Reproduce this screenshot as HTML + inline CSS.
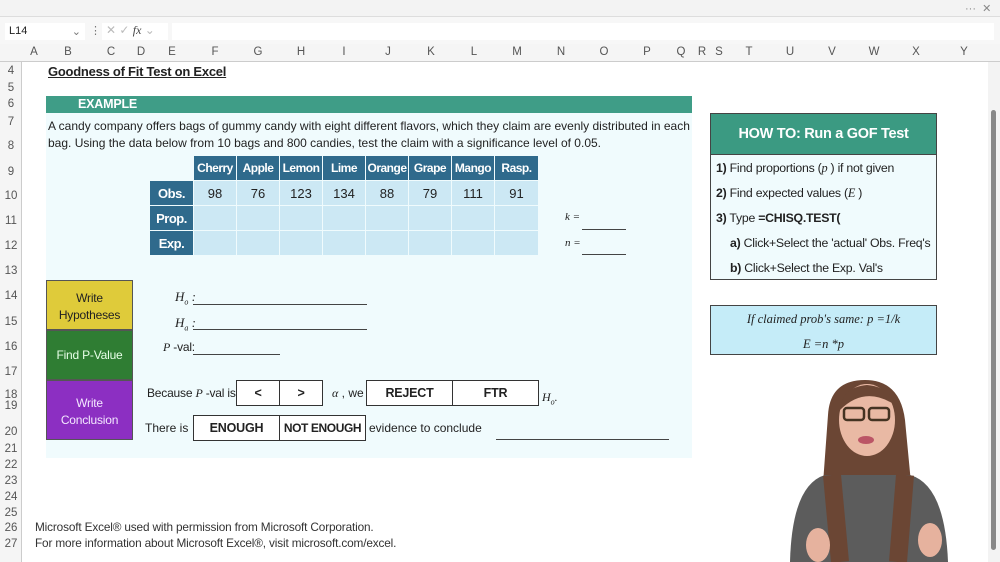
<!DOCTYPE html>
<html><head><style>
*{margin:0;padding:0;box-sizing:border-box}
body{width:1000px;height:562px;overflow:hidden;background:#fff;font-family:"Liberation Sans",Arial,sans-serif;position:relative;color:#222}
.a{position:absolute}
.rn{position:absolute;left:0;width:22px;text-align:center;font-size:11.5px;color:#555}
.ch{position:absolute;top:46px;font-size:11.5px;color:#555;transform:translateX(-50%)}
.cell{position:absolute;height:24px;display:flex;align-items:center;justify-content:center;font-size:13px}
.hd{background:#2f6a8c;color:#fff;font-weight:bold;font-size:12px;letter-spacing:-0.5px;white-space:nowrap}
.dt{background:#cce8f4}
.btn{position:absolute;border:1.5px solid #333;background:#fff;display:flex;align-items:center;justify-content:center;font-weight:bold;font-size:12.5px;height:26px;letter-spacing:-0.2px}
.it{font-family:"Liberation Serif",serif;font-style:italic}
.ln{position:absolute;border-bottom:1px solid #444;height:1px}
</style></head><body>
<div class="a" style="left:0;top:0;width:1000px;height:17px;background:#f3f3f3;border-bottom:1px solid #ddd"></div>
<div class="a" style="left:965px;top:2px;font-size:11px;color:#888">··· &nbsp;✕</div>
<div class="a" style="left:0;top:17px;width:1000px;height:27px;background:#f7f7f7"></div>
<div class="a" style="left:5px;top:23px;width:80px;height:17px;background:#fff;font-size:11px;padding:2px 4px">L14<span style="float:right;color:#777">⌄</span></div>
<div class="a" style="left:90px;top:24px;font-size:11px;color:#777">⋮</div>
<div class="a" style="left:102px;top:23px;width:66px;height:17px;background:#fff;font-size:12px;color:#bbb;padding-left:4px">✕ ✓ <span style="color:#444;font-family:'Liberation Serif';font-style:italic">fx</span> ⌄</div>
<div class="a" style="left:172px;top:23px;width:822px;height:17px;background:#fff"></div>
<div class="a" style="left:0;top:44px;width:1000px;height:18px;background:#f5f5f5;border-bottom:1px solid #ccc"></div>
<div class="a" style="left:0;top:62px;width:22px;height:500px;background:#f5f5f5;border-right:1px solid #ccc"></div>
<div class="ch" style="left:34px">A</div><div class="ch" style="left:68px">B</div><div class="ch" style="left:111px">C</div><div class="ch" style="left:141px">D</div><div class="ch" style="left:172px">E</div><div class="ch" style="left:215px">F</div><div class="ch" style="left:258px">G</div><div class="ch" style="left:301px">H</div><div class="ch" style="left:344px">I</div><div class="ch" style="left:388px">J</div><div class="ch" style="left:431px">K</div><div class="ch" style="left:474px">L</div><div class="ch" style="left:517px">M</div><div class="ch" style="left:561px">N</div><div class="ch" style="left:604px">O</div><div class="ch" style="left:647px">P</div><div class="ch" style="left:681px">Q</div><div class="ch" style="left:702px">R</div><div class="ch" style="left:719px">S</div><div class="ch" style="left:749px">T</div><div class="ch" style="left:790px">U</div><div class="ch" style="left:832px">V</div><div class="ch" style="left:874px">W</div><div class="ch" style="left:916px">X</div><div class="ch" style="left:964px">Y</div>
<div class="rn" style="top:65px">4</div><div class="rn" style="top:82px">5</div><div class="rn" style="top:98px">6</div><div class="rn" style="top:116px">7</div><div class="rn" style="top:140px">8</div><div class="rn" style="top:166px">9</div><div class="rn" style="top:190px">10</div><div class="rn" style="top:215px">11</div><div class="rn" style="top:240px">12</div><div class="rn" style="top:265px">13</div><div class="rn" style="top:290px">14</div><div class="rn" style="top:316px">15</div><div class="rn" style="top:341px">16</div><div class="rn" style="top:366px">17</div><div class="rn" style="top:389px">18</div><div class="rn" style="top:400px">19</div><div class="rn" style="top:426px">20</div><div class="rn" style="top:443px">21</div><div class="rn" style="top:459px">22</div><div class="rn" style="top:475px">23</div><div class="rn" style="top:491px">24</div><div class="rn" style="top:507px">25</div><div class="rn" style="top:522px">26</div><div class="rn" style="top:538px">27</div>
<div class="a" style="left:988px;top:62px;width:12px;height:500px;background:#f3f3f3"></div>
<div class="a" style="left:991px;top:110px;width:5px;height:440px;background:#888;border-radius:3px"></div>

<div class="a" style="left:48px;top:64px;font-weight:bold;font-size:13px;text-decoration:underline;letter-spacing:-0.25px">Goodness of Fit Test on Excel</div>
<div class="a" style="left:46px;top:112px;width:646px;height:346px;background:#f0fbfd"></div>
<div class="a" style="left:46px;top:96px;width:646px;height:17px;background:#3f9d87;color:#fff;font-weight:bold;font-size:12.5px;padding:1px 0 0 32px;letter-spacing:-0.2px">EXAMPLE</div>
<div class="a" style="left:48px;top:118px;width:648px;font-size:12px;line-height:17px">A candy company offers bags of gummy candy with eight different flavors, which they claim are evenly distributed in each bag. Using the data below from 10 bags and 800 candies, test the claim with a significance level of 0.05.</div>

<div class="cell hd" style="left:194px;top:156px;width:42px">Cherry</div><div class="cell hd" style="left:237px;top:156px;width:42px">Apple</div><div class="cell hd" style="left:280px;top:156px;width:42px">Lemon</div><div class="cell hd" style="left:323px;top:156px;width:42px">Lime</div><div class="cell hd" style="left:366px;top:156px;width:42px">Orange</div><div class="cell hd" style="left:409px;top:156px;width:42px">Grape</div><div class="cell hd" style="left:452px;top:156px;width:42px">Mango</div><div class="cell hd" style="left:495px;top:156px;width:43px">Rasp.</div>
<div class="cell hd" style="left:150px;top:181px;width:43px;font-size:13px">Obs.</div><div class="cell hd" style="left:150px;top:206px;width:43px;font-size:13px">Prop.</div><div class="cell hd" style="left:150px;top:231px;width:43px;font-size:13px">Exp.</div>
<div class="cell dt" style="left:194px;top:181px;width:42px">98</div><div class="cell dt" style="left:237px;top:181px;width:42px">76</div><div class="cell dt" style="left:280px;top:181px;width:42px">123</div><div class="cell dt" style="left:323px;top:181px;width:42px">134</div><div class="cell dt" style="left:366px;top:181px;width:42px">88</div><div class="cell dt" style="left:409px;top:181px;width:42px">79</div><div class="cell dt" style="left:452px;top:181px;width:42px">111</div><div class="cell dt" style="left:495px;top:181px;width:43px">91</div>
<div class="cell dt" style="left:194px;top:206px;width:42px"></div><div class="cell dt" style="left:237px;top:206px;width:42px"></div><div class="cell dt" style="left:280px;top:206px;width:42px"></div><div class="cell dt" style="left:323px;top:206px;width:42px"></div><div class="cell dt" style="left:366px;top:206px;width:42px"></div><div class="cell dt" style="left:409px;top:206px;width:42px"></div><div class="cell dt" style="left:452px;top:206px;width:42px"></div><div class="cell dt" style="left:495px;top:206px;width:43px"></div>
<div class="cell dt" style="left:194px;top:231px;width:42px"></div><div class="cell dt" style="left:237px;top:231px;width:42px"></div><div class="cell dt" style="left:280px;top:231px;width:42px"></div><div class="cell dt" style="left:323px;top:231px;width:42px"></div><div class="cell dt" style="left:366px;top:231px;width:42px"></div><div class="cell dt" style="left:409px;top:231px;width:42px"></div><div class="cell dt" style="left:452px;top:231px;width:42px"></div><div class="cell dt" style="left:495px;top:231px;width:43px"></div>
<div class="a it" style="left:565px;top:211px;font-size:11px">k =</div><div class="ln" style="left:582px;top:229px;width:44px"></div>
<div class="a it" style="left:565px;top:237px;font-size:11px">n =</div><div class="ln" style="left:582px;top:254px;width:44px"></div>

<div class="a" style="left:46px;top:280px;width:87px;height:50px;background:#dfcb3a;border:1px solid #555;font-size:12px;text-align:center;padding-top:9px;line-height:17px;letter-spacing:-0.2px">Write<br>Hypotheses</div>
<div class="a" style="left:46px;top:330px;width:87px;height:50px;background:#2f7d33;border:1px solid #555;color:#e8ffe8;font-size:12px;text-align:center;padding-top:17px;letter-spacing:-0.2px">Find P-Value</div>
<div class="a" style="left:46px;top:380px;width:87px;height:60px;background:#8c2fc2;border:1px solid #555;color:#f4e8ff;font-size:12px;text-align:center;padding-top:14px;line-height:17px;letter-spacing:-0.2px">Write<br>Conclusion</div>

<div class="a it" style="left:175px;top:289px;font-size:13px">H<sub style="font-size:8px">o</sub> :</div><div class="ln" style="left:193px;top:304px;width:174px"></div>
<div class="a it" style="left:175px;top:315px;font-size:13px">H<sub style="font-size:8px">a</sub> :</div><div class="ln" style="left:193px;top:329px;width:174px"></div>
<div class="a" style="left:163px;top:340px;font-size:12px;letter-spacing:-0.2px"><span class="it">P</span> -val:</div><div class="ln" style="left:193px;top:354px;width:87px"></div>

<div class="a" style="left:147px;top:386px;font-size:12px;letter-spacing:-0.2px">Because <span class="it">P</span> -val is</div>
<div class="btn" style="left:236px;top:380px;width:44px">&lt;</div><div class="btn" style="left:279px;top:380px;width:44px">&gt;</div>
<div class="a" style="left:332px;top:386px;font-size:12px"><span class="it">α</span> , we</div>
<div class="btn" style="left:366px;top:380px;width:87px">REJECT</div><div class="btn" style="left:452px;top:380px;width:87px">FTR</div>
<div class="a it" style="left:542px;top:390px;font-size:12px">H<sub style="font-size:8px">o</sub>.</div>
<div class="a" style="left:145px;top:421px;font-size:12px">There is</div>
<div class="btn" style="left:193px;top:415px;width:87px">ENOUGH</div><div class="btn" style="left:279px;top:415px;width:87px;font-size:12px;letter-spacing:-0.4px">NOT ENOUGH</div>
<div class="a" style="left:369px;top:421px;font-size:12px">evidence to conclude</div>
<div class="ln" style="left:496px;top:439px;width:173px"></div>

<div class="a" style="left:710px;top:113px;width:227px;height:167px;background:#f0fbfd;border:1px solid #444"></div>
<div class="a" style="left:710px;top:113px;width:227px;height:42px;background:#3b9a82;border:1px solid #444;color:#fff;font-weight:bold;font-size:14.5px;text-align:center;padding-top:12px;letter-spacing:-0.3px">HOW TO: Run a GOF Test</div>
<div class="a" style="left:716px;top:156px;font-size:12.3px;line-height:25px;letter-spacing:-0.25px">
<div><b>1)</b> Find proportions (<span class="it">p</span> ) if not given</div>
<div><b>2)</b> Find expected values (<span class="it">E</span> )</div>
<div><b>3)</b> Type <b>=CHISQ.TEST(</b></div>
<div style="padding-left:14px"><b>a)</b> Click+Select the 'actual' Obs. Freq's</div>
<div style="padding-left:14px"><b>b)</b> Click+Select the Exp. Val's</div></div>
<div class="a it" style="left:710px;top:305px;width:227px;height:50px;background:#c5ecf8;border:1px solid #444;text-align:center;font-size:12.5px;line-height:25px;padding-top:1px">If claimed prob's same: p =1/k<br>E =n *p</div>

<div class="a" style="left:35px;top:519px;font-size:11.8px;line-height:16px;color:#333;letter-spacing:-0.15px">Microsoft Excel® used with permission from Microsoft Corporation.<br>For more information about Microsoft Excel®, visit microsoft.com/excel.</div>

<svg class="a" style="left:780px;top:375px" width="180" height="187">
<path d="M48 40 Q50 5 85 5 Q120 5 125 45 L135 150 L40 150 Z" fill="#6b4634"/>
<path d="M10 187 Q12 110 45 100 L130 100 Q165 110 168 187 Z" fill="#5c5c5c"/>
<path d="M52 100 L60 187 M125 100 L118 187" stroke="#6b4634" stroke-width="18"/>
<ellipse cx="87" cy="45" rx="28" ry="36" fill="#e9b9a4"/>
<path d="M60 35 Q85 10 115 30 Q110 12 87 10 Q62 12 60 35Z" fill="#6b4634"/>
<rect x="64" y="33" width="20" height="12" rx="3" fill="none" stroke="#432" stroke-width="2.5"/>
<rect x="89" y="33" width="20" height="12" rx="3" fill="none" stroke="#432" stroke-width="2.5"/>
<ellipse cx="86" cy="65" rx="8" ry="4" fill="#b56"/>
<ellipse cx="38" cy="170" rx="12" ry="17" fill="#e6b29e"/>
<ellipse cx="150" cy="165" rx="12" ry="17" fill="#e6b29e"/>
</svg>
</body></html>
